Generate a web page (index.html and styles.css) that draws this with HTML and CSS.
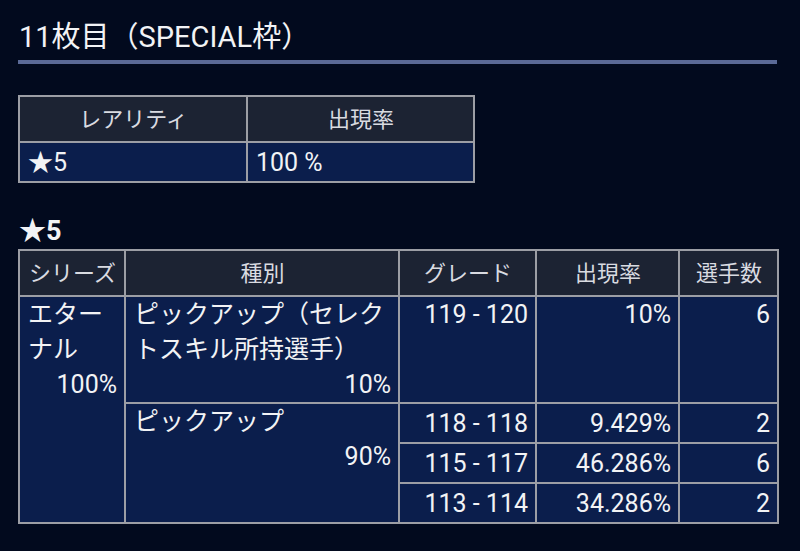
FILE: index.html
```html
<!DOCTYPE html>
<html lang="ja">
<head>
<meta charset="utf-8">
<title>11枚目（SPECIAL枠）</title>
<link rel="stylesheet" href="styles.css">
</head>
<body>
<main class="page">
  <h1 class="title">11枚目（SPECIAL枠）</h1>

  <table class="grid rarity">
    <colgroup><col class="c-r1"><col class="c-r2"></colgroup>
    <thead>
      <tr><th>レアリティ</th><th>出現率</th></tr>
    </thead>
    <tbody>
      <tr class="row-short"><td>★5</td><td>100 %</td></tr>
    </tbody>
  </table>

  <h2 class="sub">★5</h2>

  <table class="grid detail">
    <colgroup>
      <col class="c-series"><col class="c-kind"><col class="c-grade"><col class="c-rate"><col class="c-num">
    </colgroup>
    <thead>
      <tr><th>シリーズ</th><th>種別</th><th>グレード</th><th>出現率</th><th>選手数</th></tr>
    </thead>
    <tbody>
      <tr class="row-tall">
        <td rowspan="4" class="top">エターナル<div class="right">100%</div></td>
        <td class="top">ピックアップ（セレクトスキル所持選手）<div class="right">10%</div></td>
        <td class="top right">119 - 120</td>
        <td class="top right">10%</td>
        <td class="top right">6</td>
      </tr>
      <tr class="row-short">
        <td rowspan="3" class="top">ピックアップ<div class="right">90%</div></td>
        <td class="right">118 - 118</td>
        <td class="right">9.429%</td>
        <td class="right">2</td>
      </tr>
      <tr class="row-short">
        <td class="right">115 - 117</td>
        <td class="right">46.286%</td>
        <td class="right">6</td>
      </tr>
      <tr class="row-short">
        <td class="right">113 - 114</td>
        <td class="right">34.286%</td>
        <td class="right">2</td>
      </tr>
    </tbody>
  </table>
</main>
</body>
</html>
```

FILE: styles.css
```css
html, body {
  margin: 0;
  padding: 0;
  background: #020a1e;
}

body {
  font-family: Roboto, "Noto Sans CJK JP", sans-serif;
  color: #f2f3f5;
}

.page {
  width: 759px;
  padding: 0 0 0 18px;
}

.title {
  margin: 19px 0 0 0;
  padding: 0 0 5px 1px;
  font-size: 29px;
  font-weight: 400;
  line-height: 36px;
  border-bottom: 4px solid #5b6a97;
}

.sub {
  margin: 30px 0 0 1px;
  font-size: 27px;
  font-weight: 700;
  line-height: 36px;
}

.grid {
  border-collapse: collapse;
  table-layout: fixed;
  font-size: 25px;
  line-height: 35px;
}

.grid th,
.grid td {
  border: 2px solid #9c9ea5;
  padding: 0 7px 0 8px;
  overflow: hidden;
}

.grid th {
  background: #1c2333;
  color: #d9dbe1;
  font-weight: 400;
  font-size: 22px;
  height: 44px;
  text-align: center;
  vertical-align: middle;
}

.grid td {
  background: #0b1e4c;
  vertical-align: middle;
}

.grid td.top {
  vertical-align: top;
}

.right {
  text-align: right;
}

.rarity {
  width: 455px;
  margin-top: 31px;
}

.c-r1 { width: 228px; }
.c-r2 { width: 227px; }

.detail {
  width: 759px;
}

.c-series { width: 106px; }
.c-kind { width: 274px; }
.c-grade { width: 137px; }
.c-rate { width: 143px; }
.c-num { width: 99px; }

.row-tall td {
  height: 105px;
}

.row-short td {
  height: 38px;
}
```
